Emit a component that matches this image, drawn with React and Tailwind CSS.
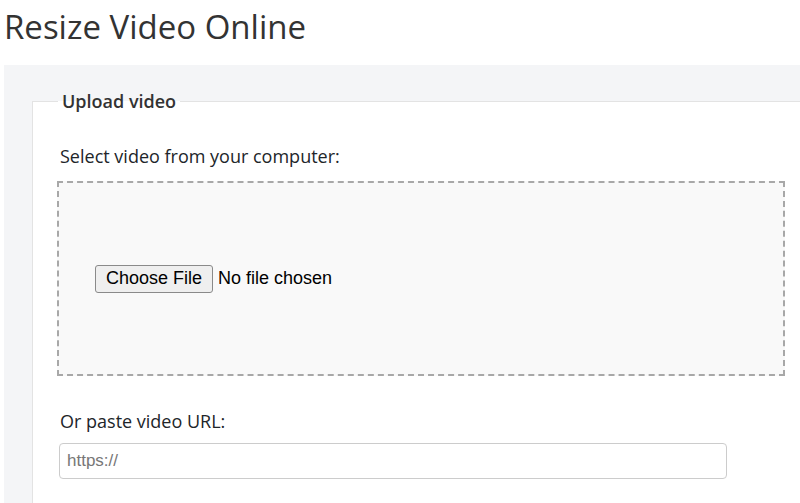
export default function App() {
  return (
    <div className="w-[800px] h-[503px] overflow-hidden bg-white text-[#212529]" style={{ fontFamily: '"Open Sans", "Noto Sans", sans-serif' }}>
      <h1 className="pl-[4px] pt-[5px] h-[65px] text-[33px] leading-[44px] text-[#333]">Resize Video Online</h1>
      <div className="ml-[4px] w-[840px] h-[500px] bg-[#f4f5f7] pt-[25px] pl-[28px]">
        <fieldset className="border-t border-l border-[#e3e3e3] bg-white h-[430px] pl-[24px] pr-[80px]">
          <legend className="ml-[1px] px-[4px] text-[18px] font-semibold text-[#333] leading-[22px]">Upload video</legend>
          <div className="pt-[31px] pl-[3px] text-[18px] leading-[27px] text-[#212529]">Select video from your computer:</div>
          <div className="mt-[11px] w-[728px] h-[195px] border-2 border-dashed border-[#a8a8a8] bg-[#f9f9f9] flex items-center pl-[36px]">
            <div className="flex items-center" style={{ fontFamily: '"Liberation Sans", Arial, sans-serif' }}>
              <span className="h-[28px] px-[10px] flex items-center border border-[#8a8a8a] rounded-[3px] bg-[#efefef] text-[18px] text-black">Choose File</span>
              <span className="ml-[5px] text-[18px] text-black">No file chosen</span>
            </div>
          </div>
          <div className="pt-[32px] pl-[3px] text-[18px] leading-[27px]">Or paste video URL:</div>
          <div className="mt-[8px] ml-[2px] w-[668px] h-[36px] border border-[#ccc] rounded-[4px] flex items-center pl-[7px] text-[17px] text-[#777]" style={{ fontFamily: '"Liberation Sans", Arial, sans-serif' }}>
            https://
          </div>
        </fieldset>
      </div>
    </div>
  );
}
